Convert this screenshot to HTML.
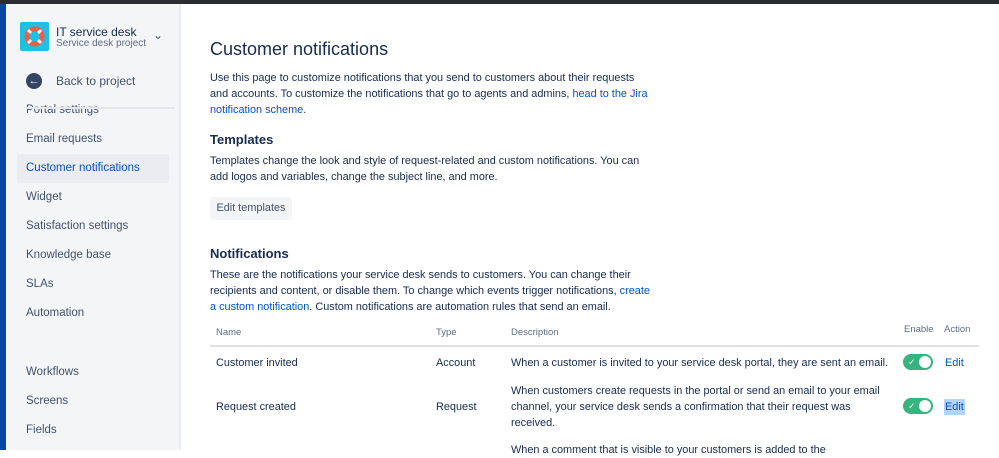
<!DOCTYPE html><html><head><style>
body{margin:0;width:999px;height:450px;overflow:hidden;font-family:"Liberation Sans",sans-serif;background:#fff;position:relative;color:#172b4d}
.top{position:absolute;left:0;top:0;width:999px;height:4px;background:#2b2d31}
.blue{position:absolute;left:0;top:4px;width:6px;height:446px;background:#0747a6}
.side{position:absolute;left:6px;top:4px;width:173px;height:446px;background:#f4f5f7;border-right:2px solid #ebecf0}
.side .it{position:absolute;left:20px;font-size:11.5px;color:#42526e}
.main{position:absolute;left:210px;top:0;width:780px;font-size:10.9px;line-height:16px;color:#172b4d;white-space:nowrap}
a{color:#0052cc;text-decoration:none}
.tog{position:absolute;width:30px;height:16px;border-radius:8px;background:#36b37e}
.tog::after{content:"";position:absolute;right:2px;top:2px;width:12px;height:12px;border-radius:6px;background:#fff}
.tog span{position:absolute;left:5px;top:0;color:#fff;font-size:9px}
</style></head><body>
<div class="top"></div><div class="blue"></div>
<div class="side">
<div style="position:absolute;left:14px;top:18px;width:29px;height:29px;background:#1fc1e0;border-radius:2px">
<svg width="29" height="29"><circle cx="14.5" cy="14.5" r="10" fill="#ef5b4c"/><circle cx="14.5" cy="14.5" r="5" fill="#1fc1e0"/><g stroke="#fff" stroke-width="3"><line x1="8" y1="8" x2="11" y2="11"/><line x1="21" y1="8" x2="18" y2="11"/><line x1="8" y1="21" x2="11" y2="18"/><line x1="21" y1="21" x2="18" y2="18"/></g></svg></div>
<div style="position:absolute;left:50px;top:21px;font-size:12px;color:#172b4d">IT service desk</div>
<div style="position:absolute;left:50px;top:34px;font-size:10px;color:#5e6c84">Service desk project</div>
<div style="position:absolute;left:147px;top:24px;font-size:12px;color:#42526e">&#8964;</div>
<div style="position:absolute;left:20px;top:69px;width:16px;height:16px;border-radius:8px;background:#344563;color:#fff;font-size:11px;line-height:16px;text-align:center">&#8592;</div>
<div class="it" style="left:50px;top:70px;font-size:12px">Back to project</div>
<div class="it" style="top:100px">Portal settings</div>
<div style="position:absolute;left:20px;top:103px;width:149px;height:2px;background:#e4e6ea"></div>
<div class="it" style="top:129px">Email requests</div>
<div style="position:absolute;left:11px;top:150px;width:152px;height:29px;background:#ebecf0;border-radius:3px"></div>
<div class="it" style="top:158px;color:#0052cc">Customer notifications</div>
<div class="it" style="top:187px">Widget</div>
<div class="it" style="top:216px">Satisfaction settings</div>
<div class="it" style="top:245px">Knowledge base</div>
<div class="it" style="top:274px">SLAs</div>
<div class="it" style="top:303px">Automation</div>
<div class="it" style="top:362px">Workflows</div>
<div class="it" style="top:391px">Screens</div>
<div class="it" style="top:420px">Fields</div>
</div>
<div class="main">
<div style="position:absolute;top:38px;font-size:18px;line-height:22px">Customer notifications</div>
<div style="position:absolute;top:70px">Use this page to customize notifications that you send to customers about their requests<br>and accounts. To customize the notifications that go to agents and admins, <a>head to the Jira<br>notification scheme</a>.</div>
<div style="position:absolute;top:132px;font-size:13px;font-weight:bold">Templates</div>
<div style="position:absolute;top:153px">Templates change the look and style of request-related and custom notifications. You can<br>add logos and variables, change the subject line, and more.</div>
<div style="position:absolute;top:197px;left:0;width:82px;height:23px;background:#f4f5f7;border-radius:3px;text-align:center;line-height:23px;color:#42526e">Edit templates</div>
<div style="position:absolute;top:246px;font-size:13px;font-weight:bold">Notifications</div>
<div style="position:absolute;top:267px">These are the notifications your service desk sends to customers. You can change their<br>recipients and content, or disable them. To change which events trigger notifications, <a>create</a><br><a>a custom notification</a>. Custom notifications are automation rules that send an email.</div>
<div style="position:absolute;top:325px;left:6px;font-size:9.5px;color:#5e6c84">Name</div>
<div style="position:absolute;top:325px;left:226px;font-size:9.5px;color:#5e6c84">Type</div>
<div style="position:absolute;top:325px;left:301px;font-size:9.5px;color:#5e6c84">Description</div>
<div style="position:absolute;top:322px;left:694px;font-size:9.5px;color:#5e6c84">Enable</div>
<div style="position:absolute;top:322px;left:734px;font-size:9.5px;color:#5e6c84">Action</div>
<div style="position:absolute;top:345px;left:0;width:769px;height:2px;background:#dfe1e6"></div>
<div style="position:absolute;top:355px;left:6px">Customer invited</div>
<div style="position:absolute;top:355px;left:226px">Account</div>
<div style="position:absolute;top:355px;left:301px">When a customer is invited to your service desk portal, they are sent an email.</div>
<div class="tog" style="top:354px;left:693px"><span>✓</span></div>
<div style="position:absolute;top:355px;left:735px;color:#0052cc">Edit</div>
<div style="position:absolute;top:399px;left:6px">Request created</div>
<div style="position:absolute;top:399px;left:226px">Request</div>
<div style="position:absolute;top:383px;left:301px">When customers create requests in the portal or send an email to your email<br>channel, your service desk sends a confirmation that their request was<br>received.</div>
<div class="tog" style="top:398px;left:693px"><span>✓</span></div>
<div style="position:absolute;top:399px;left:734px;color:#0052cc;background:#b3d4fc;padding:0 1px">Edit</div>
<div style="position:absolute;top:442px;left:301px">When a comment that is visible to your customers is added to the</div>
</div>
</body></html>
